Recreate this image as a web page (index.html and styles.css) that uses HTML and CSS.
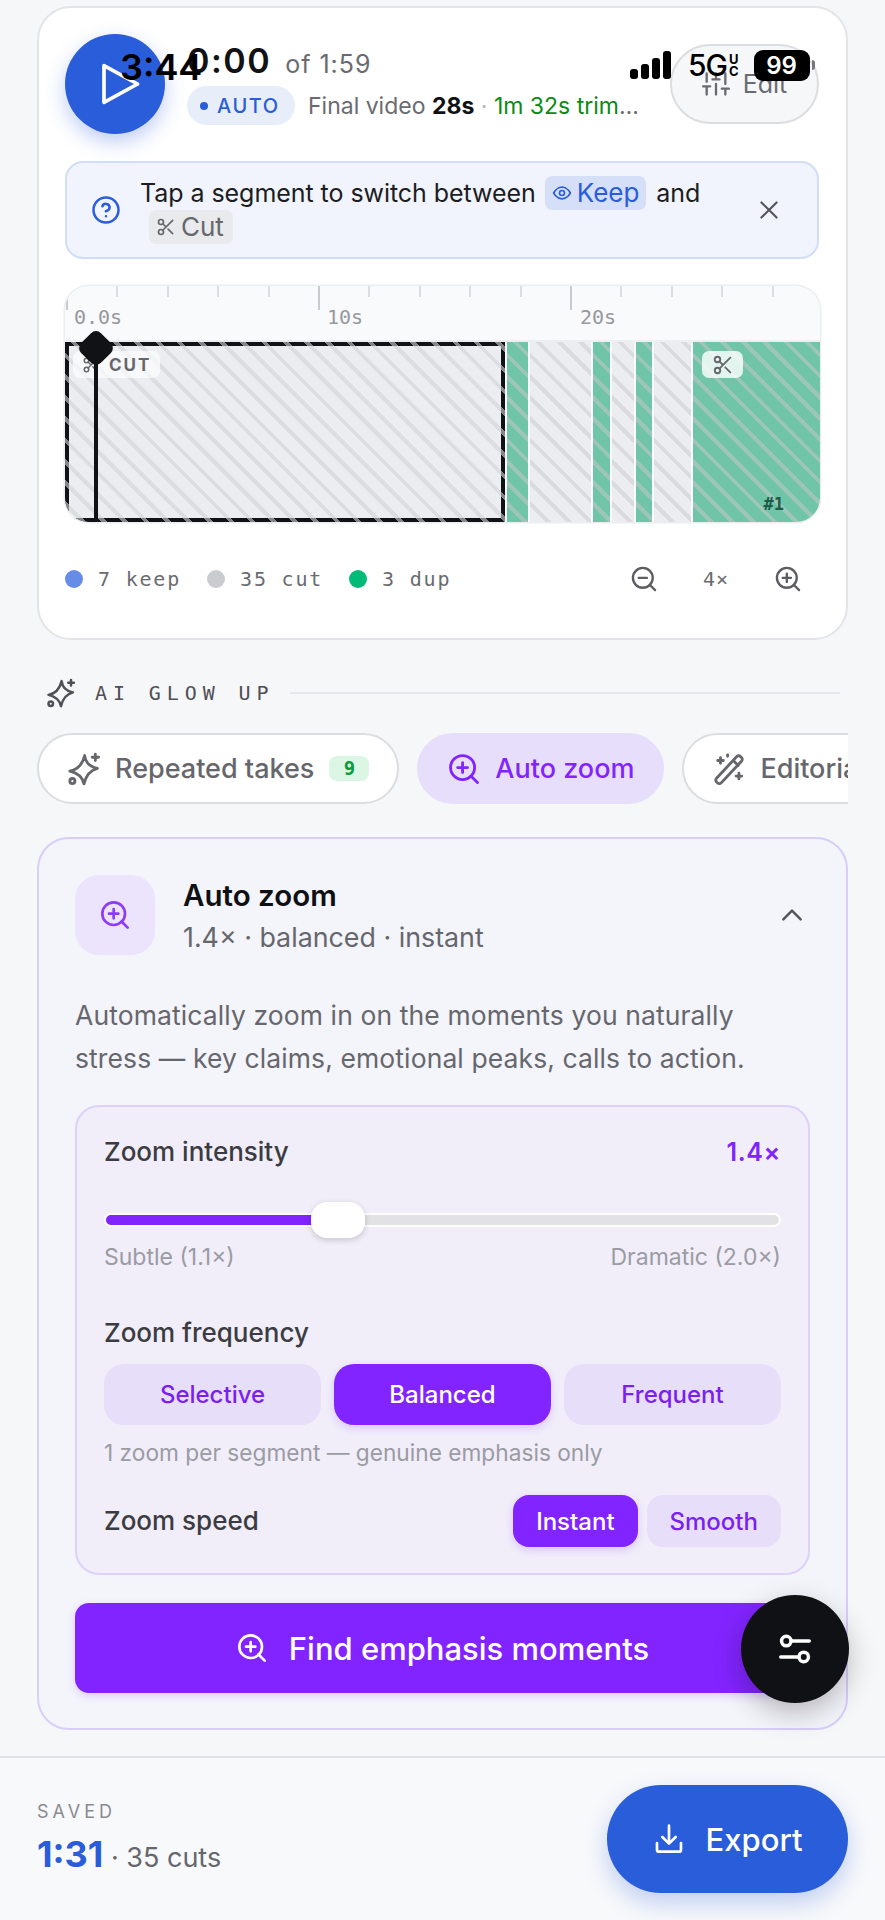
FILE: index.html
```html
<!DOCTYPE html>
<html lang="en">
<head>
<meta charset="utf-8">
<title>Video editor</title>
<link rel="stylesheet" href="styles.css">
</head>
<body>
<svg class="defs" aria-hidden="true">
  <symbol id="i-zoom-in" viewBox="0 0 24 24"><circle cx="11" cy="11" r="8.500"/><path d="M21.500 21.500l-4.600-4.600M11 7.500v7M7.500 11h7"/></symbol>
  <symbol id="i-zoom-out" viewBox="0 0 24 24"><circle cx="11" cy="11" r="8.500"/><path d="M21.500 21.500l-4.600-4.600M7.500 11h7"/></symbol>
  <symbol id="i-scissors" viewBox="0 0 24 24"><circle cx="6" cy="6" r="3"/><circle cx="6" cy="18" r="3"/><path d="M8.100 8.100L12 12M20 4L8.100 15.900M14.500 14.500L20 20"/></symbol>
  <symbol id="i-sparkle" viewBox="0 0 24 24"><path d="M12.500 2.500C13 7 15.500 10.300 21.500 11.500 16.500 12.800 13.500 16 12 22.500 11 18 8.500 15 2 13.500 7.500 12.500 11 8.500 12.500 2.500z"/><path d="M20 1.500v4.500M17.800 3.700h4.500"/><circle cx="3.800" cy="20.500" r="1.800"/></symbol>
</svg>

<div class="status" aria-label="Status bar">
  <span class="clock">3:44</span>
  <div class="status-right">
    <span class="bars"><i class="b1"></i><i class="b2"></i><i class="b3"></i><i class="b4"></i></span>
    <span class="net">5G</span>
    <span class="uc"><span>U</span><span>C</span></span>
    <span class="batt">99</span>
    <i class="nub"></i>
  </div>
</div>

<main class="page">
  <section class="card">
    <header class="player">
      <button class="play"><svg class="ic" viewBox="0 0 24 24"><path d="M6 3.500L21.500 12 6 20.500z"/></svg></button>
      <div class="meta">
        <div class="time"><span class="now">0:00</span><span class="of">of 1:59</span></div>
        <div class="stats">
          <span class="auto"><i class="dot"></i>AUTO</span>
          <span class="final">Final video <b>28s</b> <span class="sep">·</span> <span class="trim">1m 32s trimmed</span></span>
        </div>
      </div>
      <button class="edit">
        <svg class="ic" viewBox="0 0 24 24"><path d="M4 21v-7M4 10V3M12 21v-9M12 8V3M20 21v-5M20 12V3M1 14h6M9 8h6M17 16h6"/></svg>Edit
      </button>
    </header>

    <div class="hint">
      <svg class="ic hint-q" viewBox="0 0 24 24"><circle cx="12" cy="12" r="10"/><path d="M9.100 9a3 3 0 0 1 5.800 1c0 2-3 3-3 3M12 17h.01"/></svg>
      <p class="hint-text">Tap a segment to switch between <span class="tag tag-keep"><svg class="ic" viewBox="0 0 24 24"><path d="M2 12s3.600-7 10-7 10 7 10 7-3.600 7-10 7-10-7-10-7z"/><circle cx="12" cy="12" r="3"/></svg>Keep</span> and <span class="tag tag-cut"><svg class="ic"><use href="#i-scissors"/></svg>Cut</span></p>
      <svg class="ic hint-x" viewBox="0 0 24 24"><path d="M5 5l14 14M19 5L5 19"/></svg>
    </div>

    <div class="timeline">
      <div class="ruler">
        <span class="tick-label l0">0.0s</span>
        <span class="tick-label l1">10s</span>
        <span class="tick-label l2">20s</span>
      </div>
      <div class="track">
        <div class="seg selected" style="width:440px"><span class="seg-chip"><svg class="ic"><use href="#i-scissors"/></svg>CUT</span></div>
        <div class="seg dup" style="width:21px"></div>
        <div class="seg cut" style="width:61px"></div>
        <div class="seg dup" style="width:17px"></div>
        <div class="seg cut" style="width:22px"></div>
        <div class="seg dup" style="width:16px"></div>
        <div class="seg cut" style="width:37px"></div>
        <div class="seg dup last"><span class="seg-chip chip-icon"><svg class="ic"><use href="#i-scissors"/></svg></span><span class="seg-num">#1</span></div>
      </div>
      <div class="playhead"><i class="head"></i></div>
    </div>

    <footer class="legend">
      <span class="leg"><i class="swatch s-keep"></i>7 keep</span>
      <span class="leg"><i class="swatch s-cut"></i>35 cut</span>
      <span class="leg"><i class="swatch s-dup"></i>3 dup</span>
      <div class="zoomer">
        <svg class="ic"><use href="#i-zoom-out"/></svg>
        <span class="zoom-val">4×</span>
        <svg class="ic"><use href="#i-zoom-in"/></svg>
      </div>
    </footer>
  </section>

  <div class="section-head">
    <svg class="ic"><use href="#i-sparkle"/></svg>
    <span class="section-title">AI GLOW UP</span>
    <span class="section-line"></span>
  </div>

  <nav class="chips">
    <button class="chip"><svg class="ic"><use href="#i-sparkle"/></svg>Repeated takes<span class="badge">9</span></button>
    <button class="chip active"><svg class="ic"><use href="#i-zoom-in"/></svg>Auto zoom</button>
    <button class="chip"><svg class="ic" viewBox="0 0 24 24"><path d="M3.200 18.500L17.500 3.200a1.800 1.800 0 0 1 2.600 0l.7.7a1.800 1.800 0 0 1 0 2.600L6.500 21.800a1.800 1.800 0 0 1-2.600 0l-.7-.7a1.800 1.800 0 0 1 0-2.600zM15 6l3.500 3.500M6 4v4M4 6h4M19 15v4M17 17h4M11 2v1"/></svg>Editorial</button>
  </nav>

  <section class="panel">
    <div class="panel-head">
      <span class="tile"><svg class="ic"><use href="#i-zoom-in"/></svg></span>
      <div class="panel-titles">
        <h2>Auto zoom</h2>
        <p>1.4× · balanced · instant</p>
      </div>
      <svg class="ic chev" viewBox="0 0 24 24"><path d="M4 16l8-8 8 8"/></svg>
    </div>
    <p class="desc">Automatically zoom in on the moments you naturally stress — key claims, emotional peaks, calls to action.</p>

    <div class="settings">
      <div class="row">
        <span class="label">Zoom intensity</span>
        <span class="value">1.4×</span>
      </div>
      <div class="slider">
        <div class="rail"><div class="fill" style="width:31%"></div></div>
        <span class="thumb"></span>
      </div>
      <div class="row scale"><span>Subtle (1.1×)</span><span>Dramatic (2.0×)</span></div>

      <div class="label freq-label">Zoom frequency</div>
      <div class="seg-buttons">
        <button class="opt">Selective</button>
        <button class="opt on">Balanced</button>
        <button class="opt">Frequent</button>
      </div>
      <p class="note">1 zoom per segment — genuine emphasis only</p>

      <div class="row speed">
        <span class="label">Zoom speed</span>
        <div class="speed-opts">
          <button class="opt small on">Instant</button>
          <button class="opt small">Smooth</button>
        </div>
      </div>
    </div>

    <button class="cta"><svg class="ic"><use href="#i-zoom-in"/></svg>Find emphasis moments</button>
  </section>
</main>

<button class="fab"><svg class="ic" viewBox="0 0 24 24"><path d="M9.500 7H21M3 17h11.500"/><circle cx="6.500" cy="7" r="3"/><circle cx="17.500" cy="17" r="3"/></svg></button>

<footer class="bottom">
  <div class="saved">
    <span class="saved-label">SAVED</span>
    <span class="saved-val"><b>1:31</b> · 35 cuts</span>
  </div>
  <button class="export"><svg class="ic" viewBox="0 0 24 24"><path d="M12 2v13M7 10.500l5 5 5-5M3 15v5a1.500 1.500 0 0 0 1.500 1.500h15A1.500 1.500 0 0 0 21 20v-5"/></svg>Export</button>
</footer>
</body>
</html>
```

FILE: styles.css
```css
* { box-sizing: border-box; }
html, body { margin: 0; padding: 0; }
body {
  position: relative;
  width: 885px;
  height: 1920px;
  overflow: hidden;
  background: #f6f7f9;
  color: #111215;
  font-family: Inter, "Liberation Sans", sans-serif;
}
button { font: inherit; border: 0; padding: 0; background: none; color: inherit; }
h2, p { margin: 0; }
.defs { position: absolute; width: 0; height: 0; }
.ic { display: block; flex: none; fill: none; stroke: currentColor; stroke-width: 2; stroke-linecap: round; stroke-linejoin: round; }

.page { padding: 6px 37px 0; }

/* Status bar overlay */
.status { position: absolute; left: 0; top: 0; width: 100%; z-index: 5; pointer-events: none; color: #000; }
.clock { position: absolute; left: 120px; top: 46px; font-size: 36px; line-height: 42px; font-weight: 600; }
.status-right { position: absolute; left: 630px; top: 50px; display: flex; align-items: center; height: 30px; }
.bars { display: flex; align-items: flex-end; gap: 3px; height: 28px; }
.bars i { display: block; width: 8px; background: #000; border-radius: 3px; }
.b1 { height: 10px; } .b2 { height: 15px; } .b3 { height: 21px; } .b4 { height: 28px; }
.net { margin-left: 17px; font-size: 30px; line-height: 30px; font-weight: 500; letter-spacing: -1px; }
.uc { display: flex; flex-direction: column; margin-left: 2px; font-size: 13px; line-height: 12px; font-weight: 700; }
.batt { margin-left: 15px; width: 56px; height: 31px; border-radius: 9px; background: #000; color: #fff; text-align: center; font-size: 24px; line-height: 31px; font-weight: 600; }
.nub { display: block; width: 3px; height: 10px; margin-left: 2px; border-radius: 0 3px 3px 0; background: #77787c; }

/* Player card */
.card { height: 634px; border: 2px solid #e3e4e7; border-radius: 34px; background: #fff; padding: 26px 27px 0 26px; }
.player { display: flex; align-items: flex-start; height: 100px; }
.play { width: 100px; height: 100px; flex: none; border-radius: 50%; background: #2a5dd9; color: #fff; display: flex; align-items: center; justify-content: center; box-shadow: 0 8px 20px rgba(42, 93, 217, .3); }
.play .ic { width: 52px; height: 52px; stroke-width: 1.700; margin-left: 4px; }
.meta { margin-left: 22px; width: 466px; }
.time { display: flex; align-items: baseline; height: 52px; padding-top: 7px; }
.now { font-size: 34px; line-height: 40px; font-weight: 600; letter-spacing: 1.500px; }
.of { margin-left: 14px; font-size: 25px; color: #6a6b70; letter-spacing: 1px; }
.stats { display: flex; align-items: center; height: 39px; }
.auto { display: flex; align-items: center; flex: none; width: 108px; height: 39px; padding-left: 13px; border-radius: 20px; background: #e8edfa; color: #2a5dd9; font-size: 20px; font-weight: 500; letter-spacing: 1.600px; }
.dot { width: 8px; height: 8px; border-radius: 50%; background: #2a5dd9; margin-right: 9px; }
.final { margin-left: 13px; width: 340px; font-size: 23px; color: #6a6b70; white-space: nowrap; overflow: hidden; text-overflow: ellipsis; }
.final b { color: #111215; font-weight: 700; }
.sep { color: #b5b6ba; }
.trim { color: #0b8a12; }
.edit { margin-left: 17px; margin-top: 10px; flex: none; width: 149px; height: 80px; border: 2px solid #dcdde0; border-radius: 40px; background: #f6f7f9; color: #6a6b70; display: flex; align-items: center; justify-content: center; gap: 13px; font-size: 25px; }
.edit .ic { width: 28px; height: 28px; }

.hint { margin-top: 27px; height: 98px; width: 754px; border: 2px solid #d2ddf6; border-radius: 18px; background: #f1f4fd; display: flex; align-items: center; padding: 0 35px 0 24px; }
.hint-q { width: 30px; height: 30px; color: #2a5dd9; }
.hint-text { margin-left: 19px; width: 590px; font-size: 25px; letter-spacing: -.05px; line-height: 34px; color: #1c1d21; }
.hint-x { margin-left: auto; width: 26px; height: 26px; color: #55565b; }
.tag { display: inline-flex; align-items: center; gap: 5px; height: 34px; padding: 0 7px; border-radius: 7px; vertical-align: top; font-size: 26px; }
.tag .ic { width: 20px; height: 20px; }
.tag-keep { background: #d5dff7; color: #2a5dd9; margin-left: 2px; margin-right: 3px; }
.tag-cut { background: #e9eaec; color: #66676c; margin-left: 9px; padding-right: 9px; }

/* Timeline */
.timeline { position: relative; margin-top: 27px; width: 755px; height: 236px; border-radius: 24px; overflow: hidden; background: #f9fafb; box-shadow: 0 0 0 1.500px #eceef0; }
.ruler {
  position: relative;
  height: 56px;
  border-bottom: 2px solid #eceef0;
  background:
    repeating-linear-gradient(90deg, #c9cacf 0 2px, transparent 2px 252px) 1px 0 / 100% 24px no-repeat,
    repeating-linear-gradient(90deg, #dcdde0 0 2px, transparent 2px 50.400px) 1px 0 / 100% 11px no-repeat;
}
.tick-label { position: absolute; top: 19px; font-family: "DejaVu Sans Mono", monospace; font-size: 20px; line-height: 24px; color: #97989d; }
.l0 { left: 9px; } .l1 { left: 262px; } .l2 { left: 515px; }
.track { display: flex; gap: 2px; height: 180px; background: #f9fafb; }
.seg { position: relative; flex: none; height: 100%; }
.cut { background: repeating-linear-gradient(45deg, #ecedf0 0 11px, #dadbdf 11px 15px); }
.dup { background: repeating-linear-gradient(45deg, #70c5a9 0 11px, #9dc6b8 11px 15px); }
.last { flex: 1; }
.selected { border: 4px solid #111215; background: #ecedf0; }
.selected::after { content: ""; position: absolute; inset: -4px; background: repeating-linear-gradient(45deg, transparent 0 11px, rgba(210, 211, 215, .6) 11px 15px); pointer-events: none; }
.seg-chip { position: absolute; left: 4px; top: 5px; z-index: 1; display: flex; align-items: center; gap: 9px; height: 27px; padding: 0 9px; border-radius: 7px; background: rgba(255, 255, 255, .65); color: #66676c; font-size: 17px; font-weight: 700; letter-spacing: 2px; }
.seg-chip .ic { width: 18px; height: 18px; }
.chip-icon { left: 9px; top: 9px; width: 41px; justify-content: center; padding: 0; background: rgba(255, 255, 255, .8); }
.chip-icon .ic { width: 22px; height: 22px; }
.seg-num { position: absolute; right: 36px; bottom: 8px; font-family: "DejaVu Sans Mono", monospace; font-size: 17px; font-weight: 700; color: #1c5c48; }
.playhead { position: absolute; left: 29px; top: 56px; z-index: 2; width: 4px; height: 180px; background: #111215; }
.head { position: absolute; left: -12px; top: -8px; width: 28px; height: 28px; transform: rotate(45deg); border-radius: 7px; background: #111215; }

.legend { display: flex; align-items: center; height: 30px; margin-top: 42px; font-family: "DejaVu Sans Mono", monospace; font-size: 20px; color: #6a6b70; letter-spacing: 1.800px; }
.leg { display: flex; align-items: center; margin-right: 26px; }
.swatch { width: 18px; height: 18px; border-radius: 50%; margin-right: 15px; }
.s-keep { background: #668ce8; }
.s-cut { background: #cbccd0; }
.s-dup { background: #00bb77; }
.zoomer { margin-left: auto; margin-right: 17px; display: flex; align-items: center; color: #5c5d62; letter-spacing: 0; }
.zoomer .ic { width: 28px; height: 28px; }
.zoom-val { width: 116px; text-align: center; font-size: 20px; color: #6a6b70; letter-spacing: 1px; }

/* AI section */
.section-head { display: flex; align-items: center; margin: 38px 8px 0 9px; height: 30px; color: #4f5055; }
.section-head .ic { width: 30px; height: 30px; }
.section-title { margin-left: 19px; font-family: "DejaVu Sans Mono", monospace; font-size: 20px; letter-spacing: 5.900px; white-space: nowrap; }
.section-line { flex: 1; height: 2px; margin-left: 16px; background: #e6e7ea; }

.chips { display: flex; gap: 18px; margin-top: 25px; overflow: hidden; }
.chip { flex: none; display: flex; align-items: center; height: 71px; padding: 0 28px; border: 2px solid #dcdde0; border-radius: 36px; background: #fff; color: #66676c; font-size: 27px; font-weight: 500; }
.chip .ic { width: 34px; height: 34px; margin-right: 14px; }
.chip.active { border-color: #e7defc; background: #e7defc; color: #8224ff; }
.badge { margin-left: 15px; width: 40px; height: 25px; border-radius: 8px; background: #dcf6e5; color: #0a9c3b; font-family: "DejaVu Sans Mono", monospace; font-size: 19px; line-height: 25px; font-weight: 700; text-align: center; }

/* Auto zoom panel */
.panel { margin-top: 33px; height: 893px; border: 2px solid #d9cdfa; border-radius: 32px; background: #f4f4fb; padding: 36px 36px 0; }
.panel-head { display: flex; align-items: center; height: 80px; }
.tile { width: 80px; height: 80px; border-radius: 24px; background: #ebe4fc; color: #8b3bf9; display: flex; align-items: center; justify-content: center; }
.tile .ic { width: 32px; height: 32px; }
.panel-titles { margin-left: 28px; }
.panel-titles h2 { font-size: 29.500px; line-height: 38px; font-weight: 600; color: #0f1013; }
.panel-titles p { margin-top: 5px; font-size: 26.800px; line-height: 36px; color: #66676c; }
.chev { margin-left: auto; margin-right: 5px; width: 26px; height: 26px; stroke-width: 2.300; color: #55565b; }
.desc { margin-top: 39px; width: 710px; font-size: 26.500px; letter-spacing: .1px; line-height: 43px; color: #66676c; }

.settings { margin-top: 25px; height: 470px; border: 2px solid #ddd1fa; border-radius: 24px; background: #f1eefa; padding: 30px 27px 0; }
.row { display: flex; justify-content: space-between; align-items: center; }
.label { font-size: 26px; line-height: 30px; font-weight: 500; color: #3b3c41; }
.value { font-size: 25px; font-weight: 600; color: #8224ff; letter-spacing: .6px; }
.slider { position: relative; margin-top: 35px; height: 36px; display: flex; align-items: center; }
.rail { width: 100%; height: 14px; border: 2px solid #fff; border-radius: 7px; background: #e2e2e4; overflow: hidden; }
.fill { height: 100%; background: #8224ff; }
.thumb { position: absolute; left: 207px; top: 0; width: 54px; height: 36px; border-radius: 16px; background: #fff; box-shadow: 0 2px 6px rgba(0, 0, 0, .18); }
.scale { margin-top: 6px; height: 26px; font-size: 23px; color: #9a9ba3; }
.freq-label { margin-top: 48px; }
.seg-buttons { display: grid; grid-template-columns: repeat(3, 1fr); gap: 13px; margin-top: 16px; }
.opt { height: 61px; border-radius: 20px; background: #e7defa; color: #7a1ff0; font-size: 24px; font-weight: 500; }
.opt.on { background: #8224ff; color: #fff; box-shadow: 0 3px 8px rgba(130, 36, 255, .2); }
.note { margin-top: 15px; font-size: 22.700px; line-height: 26px; color: #9a9ba3; }
.speed { margin-top: 29px; height: 52px; }
.speed-opts { display: flex; gap: 9px; }
.opt.small { height: 52px; padding: 0 23px; border-radius: 16px; }
.cta { margin-top: 28px; width: 735px; height: 90px; border-radius: 14px; background: #8224ff; color: #fff; font-size: 31px; font-weight: 500; display: flex; align-items: center; justify-content: center; gap: 21px; box-shadow: 0 3px 8px rgba(130, 36, 255, .18); }
.cta .ic { width: 32px; height: 32px; }

.fab { position: absolute; left: 741px; top: 1595px; width: 108px; height: 108px; border-radius: 50%; background: #101114; color: #fff; display: flex; align-items: center; justify-content: center; box-shadow: 0 10px 28px rgba(0, 0, 0, .25); }
.fab .ic { width: 38px; height: 38px; stroke-width: 2.200; }

/* Bottom bar */
.bottom { position: absolute; left: 0; top: 1756px; width: 100%; height: 164px; border-top: 2px solid #dfe0e3; background: #f8f9fb; display: flex; align-items: flex-start; padding: 27px 37px 0; justify-content: space-between; }
.saved { padding-top: 15px; display: flex; flex-direction: column; }
.saved-label { font-size: 18px; line-height: 24px; letter-spacing: 4px; color: #8a8b90; }
.saved-val { margin-top: 9px; font-size: 27px; line-height: 42px; color: #66676c; }
.saved-val b { font-size: 36px; font-weight: 700; color: #2a5dd9; }
.export { width: 241px; height: 108px; border-radius: 54px; background: #2a5dd9; color: #fff; font-size: 31px; font-weight: 500; display: flex; align-items: center; justify-content: center; gap: 21px; box-shadow: 0 10px 24px rgba(42, 93, 217, .28); }
.export .ic { width: 32px; height: 32px; }
```
